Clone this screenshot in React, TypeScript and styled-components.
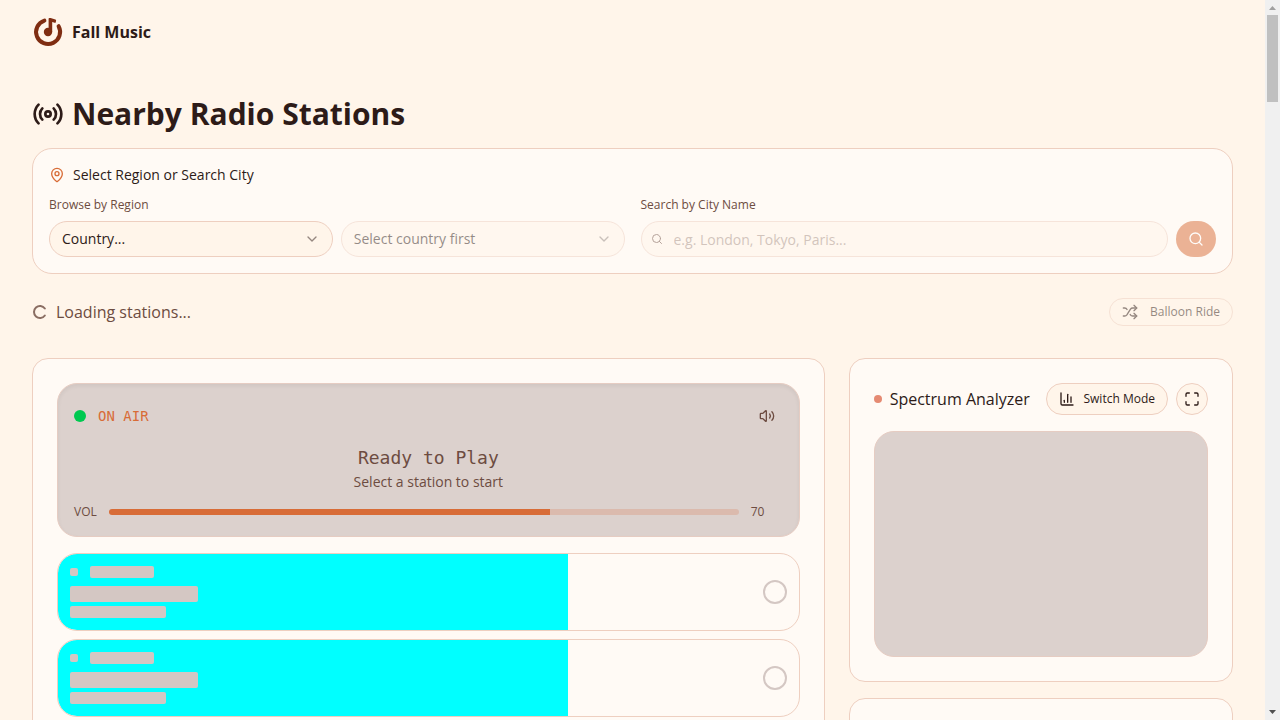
import React from "react";
import styled, { createGlobalStyle, css } from "styled-components";
import {
  ChartColumn,
  ChevronDown,
  LoaderCircle,
  MapPin,
  Maximize,
  Radio,
  Search,
  Shuffle,
  Volume2,
} from "lucide-react";

const color = {
  page: "#fff5ea",
  card: "#fffaf5",
  field: "#fff5ea",
  text: "#2d1b18",
  muted: "#6d4c41",
  accent: "#d86c37",
  border: "#eecfc0",
  screen: "#dcd1cd",
  skeleton: "#d4c7c3",
  brand: "#7f2d12",
};

const GlobalStyle = createGlobalStyle`
  *, *::before, *::after { box-sizing: border-box; }
  body {
    margin: 0;
    background: ${color.page};
    color: ${color.text};
    font-family: "Open Sans", "Noto Sans", sans-serif;
    font-size: 16px;
    line-height: 24px;
  }
  button, input, select { font: inherit; color: inherit; margin: 0; }
  h1, h2, p { margin: 0; }
  svg { display: block; flex-shrink: 0; }
`;

const Shell = styled.div`
  display: flex;
  height: 100vh;
  overflow: hidden;
`;

const Page = styled.div`
  flex: 1;
  min-width: 0;
  overflow: hidden;
`;

const ScrollTrack = styled.div`
  display: flex;
  flex-direction: column;
  align-items: center;
  width: 15px;
  padding: 6px 2px;
  background: #f0f0f0;
`;

const ScrollThumb = styled.div`
  width: 11px;
  height: 87px;
  margin-top: 5px;
  margin-bottom: auto;
  background: #c0c0c0;
`;

const Header = styled.header`
  display: flex;
  align-items: center;
  height: 64px;
  padding: 0 32px;
`;

const Brand = styled.a`
  display: flex;
  align-items: center;
  gap: 8px;
  color: inherit;
  font-weight: 700;
  text-decoration: none;
`;

const Main = styled.main`
  padding: 32px;
`;

const Title = styled.h1`
  display: flex;
  align-items: center;
  gap: 8px;
  margin-bottom: 16px;
  font-size: 30px;
  font-weight: 700;
  line-height: 36px;
`;

const SearchPanel = styled.section`
  padding: 16px;
  border: 1px solid ${color.border};
  border-radius: 20px;
  background: ${color.card};
`;

const PanelTitle = styled.h2`
  display: flex;
  align-items: center;
  gap: 8px;
  margin-bottom: 12px;
  font-size: 14px;
  font-weight: 400;
  line-height: 20px;
  svg { color: ${color.accent}; }
`;

const FieldGrid = styled.div`
  display: grid;
  grid-template-columns: 1fr 1fr;
  gap: 16px;
`;

const FieldLabel = styled.label`
  display: block;
  margin-bottom: 8px;
  color: ${color.muted};
  font-size: 12px;
  line-height: 16px;
`;

const Controls = styled.div`
  display: flex;
  gap: 8px;
`;

const FieldWrap = styled.div<{ $dim?: boolean }>`
  position: relative;
  flex: 1;
  min-width: 0;
  opacity: ${(p) => (p.$dim ? 0.5 : 1)};
`;

const fieldBox = css`
  display: block;
  width: 100%;
  height: 36px;
  border: 1px solid ${color.border};
  border-radius: 18px;
  outline: none;
  background: ${color.field};
  font-size: 14px;
`;

const Select = styled.select`
  ${fieldBox}
  padding: 0 32px 0 12px;
  appearance: none;
  color: ${color.text};
  opacity: 1;
`;

const SelectArrow = styled(ChevronDown)`
  position: absolute;
  top: 10px;
  right: 13px;
  opacity: 0.5;
  pointer-events: none;
`;

const CityInput = styled.input`
  ${fieldBox}
  padding: 1px 12px 0 32px;
  &::placeholder { color: ${color.muted}; opacity: 0.6; }
`;

const InputIcon = styled(Search)`
  position: absolute;
  top: 12px;
  left: 10px;
  color: ${color.muted};
`;

const SearchButton = styled.button`
  display: flex;
  align-items: center;
  justify-content: center;
  width: 40px;
  height: 36px;
  padding: 0;
  border: 0;
  border-radius: 18px;
  background: ${color.accent};
  color: #fff;
  opacity: 0.5;
`;

const StatusRow = styled.div`
  display: flex;
  align-items: center;
  justify-content: space-between;
  margin: 24px 0 32px;
`;

const Status = styled.p`
  display: flex;
  align-items: center;
  gap: 8px;
  color: ${color.muted};
`;

const Spinner = styled(LoaderCircle)`
  opacity: 0.8;
  transform: rotate(36deg);
`;

const PillButton = styled.button<{ $height: number; $gap: number }>`
  display: flex;
  align-items: center;
  gap: ${(p) => p.$gap}px;
  height: ${(p) => p.$height}px;
  padding: 0 12px;
  border: 1px solid ${color.border};
  border-radius: 16px;
  background: ${color.field};
  font-size: 12px;
  line-height: 16px;
  white-space: nowrap;
  &:disabled { opacity: 0.5; }
`;

const RoundButton = styled.button`
  display: flex;
  align-items: center;
  justify-content: center;
  width: 32px;
  height: 32px;
  padding: 0;
  border: 1px solid ${color.border};
  border-radius: 16px;
  background: ${color.field};
`;

const GhostButton = styled(RoundButton)`
  border-color: transparent;
  background: transparent;
  color: ${color.muted};
`;

const Columns = styled.div`
  display: grid;
  grid-template-columns: repeat(3, minmax(0, 1fr));
  gap: 24px;
`;

const Card = styled.section`
  padding: 24px;
  border: 1px solid ${color.border};
  border-radius: 16px;
  background: ${color.card};
`;

const PlayerCard = styled(Card)`
  grid-column: span 2;
`;

const SideColumn = styled.div`
  display: flex;
  flex-direction: column;
  gap: 16px;
`;

const Screen = styled.div`
  padding: 16px;
  margin-bottom: 16px;
  border: 1px solid #e6ccc2;
  border-radius: 20px;
  background: ${color.screen};
  box-shadow: inset 0 2px 4px rgba(0, 0, 0, 0.06);
`;

const ScreenTop = styled.div`
  display: flex;
  align-items: center;
  justify-content: space-between;
`;

const OnAir = styled.div`
  display: flex;
  align-items: center;
  gap: 12px;
  color: ${color.accent};
  font-family: "DejaVu Sans Mono", monospace;
  font-size: 14px;
  line-height: 20px;
`;

const Dot = styled.span<{ $size: number; $fill: string }>`
  flex-shrink: 0;
  width: ${(p) => p.$size}px;
  height: ${(p) => p.$size}px;
  border-radius: 50%;
  background: ${(p) => p.$fill};
`;

const NowPlaying = styled.div`
  margin: 12px 0;
  color: ${color.muted};
  text-align: center;
`;

const TrackName = styled.p`
  font-family: "DejaVu Sans Mono", monospace;
  font-size: 18px;
  line-height: 28px;
`;

const TrackHint = styled.p`
  font-size: 14px;
  line-height: 20px;
`;

const VolumeRow = styled.div`
  display: flex;
  align-items: center;
  gap: 12px;
  color: ${color.muted};
  font-size: 12px;
  line-height: 16px;
`;

const VolumeSlider = styled.input<{ $level: number }>`
  flex: 1;
  min-width: 0;
  height: 6px;
  border-radius: 3px;
  appearance: none;
  background: linear-gradient(
    90deg,
    ${color.accent} ${(p) => p.$level}%,
    #dbbaad ${(p) => p.$level}%
  );
  &::-webkit-slider-thumb { appearance: none; width: 0; height: 0; }
`;

const VolumeValue = styled.output`
  width: 32px;
`;

const StationList = styled.div`
  display: flex;
  flex-direction: column;
  gap: 8px;
`;

const StationRow = styled.div`
  display: flex;
  align-items: center;
  justify-content: space-between;
  padding: 12px;
  border: 1px solid ${color.border};
  border-radius: 20px;
  background: linear-gradient(90deg, #00ffff 510px, transparent 510px) padding-box;
`;

const StationInfo = styled.div`
  display: flex;
  flex-direction: column;
  gap: 4px;
`;

const StationLine = styled.div`
  display: flex;
  align-items: center;
  gap: 12px;
  margin-bottom: 4px;
`;

const Bone = styled.div<{ $w: number; $h: number }>`
  width: ${(p) => p.$w}px;
  height: ${(p) => p.$h}px;
  border-radius: 2px;
  background: ${color.skeleton};
`;

const Ring = styled.div`
  width: 24px;
  height: 24px;
  border: 2px solid ${color.skeleton};
  border-radius: 50%;
`;

const AnalyzerHead = styled.div`
  display: flex;
  align-items: center;
  gap: 8px;
  margin-bottom: 16px;
`;

const AnalyzerTitle = styled.h2`
  display: flex;
  flex: 1;
  align-items: center;
  gap: 8px;
  font-size: 16px;
  font-weight: 400;
  white-space: nowrap;
`;

const Spectrum = styled.div`
  height: 226px;
  border: 1px solid #e6ccc2;
  border-radius: 20px;
  background: ${color.screen};
`;

const EmptyCard = styled(Card)`
  flex: 1;
`;

const Logo = () => (
  <svg width="32" height="32" viewBox="0 0 32 32" fill="none" aria-hidden="true">
    <path
      d="M12.4 4.6A12 12 0 1 0 26.6 10.2"
      stroke={color.brand}
      strokeWidth="4"
      strokeLinecap="round"
    />
    <circle cx="16" cy="16" r="4.2" fill={color.brand} />
    <path d="M16.6 2.8q0-.8.8-.8h1.2l4.8 1.6q.9.3.7 1.2l-.4 1.5q-.2.8-1 .5l-2.5-.7V16h-3.6z" fill={color.brand} />
  </svg>
);

const ScrollArrow = ({ down = false }: { down?: boolean }) => (
  <svg width="7" height="4" viewBox="0 0 7 4" aria-hidden="true">
    <path d={down ? "M0 0h7L3.5 4z" : "M0 4h7L3.5 0z"} fill={down ? "#505050" : "#a0a0a0"} />
  </svg>
);

const stations = [1, 2, 3, 4, 5, 6];
const volume = 70;

export default function App() {
  return (
    <Shell>
      <GlobalStyle />
      <Page>
        <Header>
          <Brand href="#">
            <Logo />
            Fall Music
          </Brand>
        </Header>
        <Main>
          <Title>
            <Radio size={32} />
            Nearby Radio Stations
          </Title>

          <SearchPanel>
            <PanelTitle>
              <MapPin size={16} />
              Select Region or Search City
            </PanelTitle>
            <FieldGrid>
              <div>
                <FieldLabel htmlFor="country">Browse by Region</FieldLabel>
                <Controls>
                  <FieldWrap>
                    <Select id="country">
                      <option>Country...</option>
                    </Select>
                    <SelectArrow size={16} />
                  </FieldWrap>
                  <FieldWrap $dim>
                    <Select aria-label="City" disabled>
                      <option>Select country first</option>
                    </Select>
                    <SelectArrow size={16} />
                  </FieldWrap>
                </Controls>
              </div>
              <div>
                <FieldLabel htmlFor="city">Search by City Name</FieldLabel>
                <Controls>
                  <FieldWrap $dim>
                    <CityInput id="city" type="text" placeholder="e.g. London, Tokyo, Paris..." disabled />
                    <InputIcon size={12} />
                  </FieldWrap>
                  <SearchButton type="button" aria-label="Search" disabled>
                    <Search size={16} />
                  </SearchButton>
                </Controls>
              </div>
            </FieldGrid>
          </SearchPanel>

          <StatusRow>
            <Status>
              <Spinner size={16} strokeWidth={3} />
              Loading stations...
            </Status>
            <PillButton type="button" $height={28} $gap={12} disabled>
              <Shuffle size={16} />
              Balloon Ride
            </PillButton>
          </StatusRow>

          <Columns>
            <PlayerCard>
              <Screen>
                <ScreenTop>
                  <OnAir>
                    <Dot $size={12} $fill="#00c950" />
                    ON AIR
                  </OnAir>
                  <GhostButton type="button" aria-label="Mute">
                    <Volume2 size={16} />
                  </GhostButton>
                </ScreenTop>
                <NowPlaying>
                  <TrackName>Ready to Play</TrackName>
                  <TrackHint>Select a station to start</TrackHint>
                </NowPlaying>
                <VolumeRow>
                  <label htmlFor="volume">VOL</label>
                  <VolumeSlider id="volume" type="range" min={0} max={100} defaultValue={volume} $level={volume} />
                  <VolumeValue htmlFor="volume">{volume}</VolumeValue>
                </VolumeRow>
              </Screen>
              <StationList>
                {stations.map((id) => (
                  <StationRow key={id}>
                    <StationInfo>
                      <StationLine>
                        <Bone $w={8} $h={8} />
                        <Bone $w={64} $h={12} />
                      </StationLine>
                      <Bone $w={128} $h={16} />
                      <Bone $w={96} $h={12} />
                    </StationInfo>
                    <Ring />
                  </StationRow>
                ))}
              </StationList>
            </PlayerCard>

            <SideColumn>
              <Card>
                <AnalyzerHead>
                  <AnalyzerTitle>
                    <Dot $size={8} $fill="#e58a72" />
                    Spectrum Analyzer
                  </AnalyzerTitle>
                  <PillButton type="button" $height={32} $gap={8}>
                    <ChartColumn size={16} />
                    Switch Mode
                  </PillButton>
                  <RoundButton type="button" aria-label="Fullscreen">
                    <Maximize size={16} />
                  </RoundButton>
                </AnalyzerHead>
                <Spectrum />
              </Card>
              <EmptyCard />
            </SideColumn>
          </Columns>
        </Main>
      </Page>
      <ScrollTrack>
        <ScrollArrow />
        <ScrollThumb />
        <ScrollArrow down />
      </ScrollTrack>
    </Shell>
  );
}
